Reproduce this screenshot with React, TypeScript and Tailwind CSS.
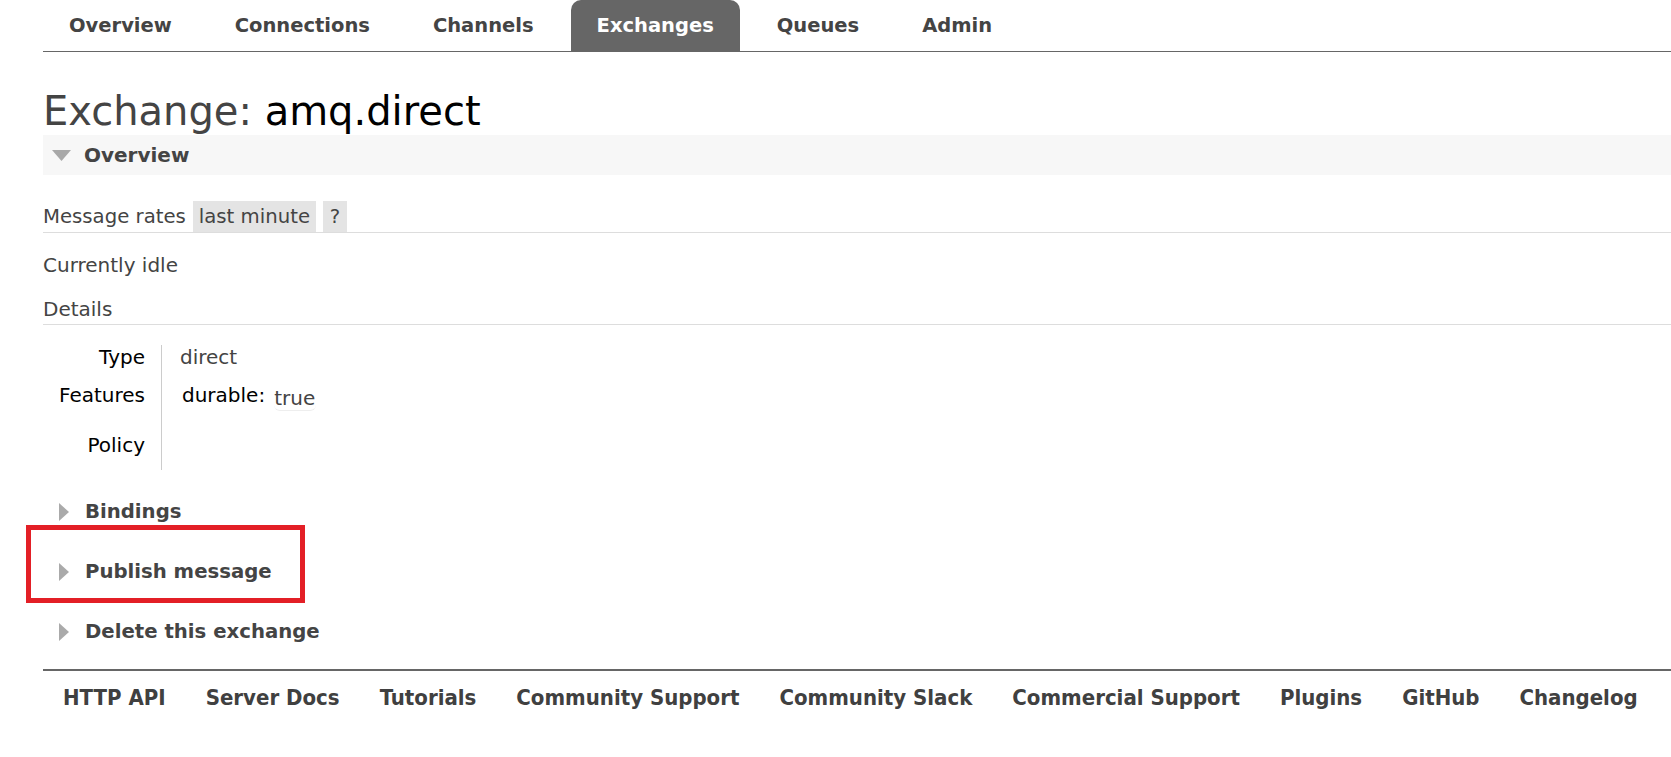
const navItems = ["Overview", "Connections", "Channels", "Exchanges", "Queues", "Admin"];

const footerLinks = [
  "HTTP API",
  "Server Docs",
  "Tutorials",
  "Community Support",
  "Community Slack",
  "Commercial Support",
  "Plugins",
  "GitHub",
  "Changelog",
];

function TriangleRight() {
  return (
    <svg width="10" height="18" viewBox="0 0 10 18" className="shrink-0">
      <polygon points="0,0 10,9 0,18" fill="#aaaaaa" />
    </svg>
  );
}

function TriangleDown() {
  return (
    <svg width="19" height="11" viewBox="0 0 19 11" className="shrink-0">
      <polygon points="0,0 19,0 9.5,11" fill="#a8a8a8" />
    </svg>
  );
}

function Section({ title, highlight }: { title: string; highlight?: boolean }) {
  return (
    <div className="relative flex h-[60px] items-center">
      <div className="flex items-center pl-[16px]">
        <TriangleRight />
        <span className="ml-[16px] text-[19.7px] font-bold leading-[24px] text-[#444]">{title}</span>
      </div>
      {highlight && (
        <div className="pointer-events-none absolute -left-[17px] -top-[17px] h-[78px] w-[279px] border-[5px] border-[#e31f26]" />
      )}
    </div>
  );
}

export default function App() {
  return (
    <div className="min-h-[757px] bg-white pl-[43px] font-['DejaVu_Sans',Verdana,sans-serif] text-[#444]">
      {/* top tabs */}
      <nav className="flex h-[52px] gap-[11px] border-b border-[#666]">
        {navItems.map((item) => (
          <div
            key={item}
            className={
              item === "Exchanges"
                ? "flex items-center rounded-t-[10px] bg-[#666] px-[26px] text-[19.5px] font-bold text-white"
                : "flex items-center px-[26px] text-[19.5px] font-bold text-[#444]"
            }
          >
            {item}
          </div>
        ))}
      </nav>

      <h1 className="mt-[35px] text-[40px] font-normal leading-[48px]">
        <span className="text-[#444]">Exchange: </span>
        <span className="text-black">amq.direct</span>
      </h1>

      <div className="flex h-[40px] items-center bg-[#f7f7f7] pl-[9px]">
        <TriangleDown />
        <span className="ml-[13px] text-[20px] font-bold text-[#444]">Overview</span>
      </div>

      <div className="mt-[26px] flex h-[32px] items-stretch border-b border-[#ddd] text-[19.7px]">
        <span className="flex items-center">Message rates</span>
        <span className="ml-[7px] flex items-center bg-[#e4e4e4] px-[6px]">last minute</span>
        <span className="ml-[7px] flex w-[24px] items-center justify-center bg-[#e4e4e4]">?</span>
      </div>

      <p className="mt-[20px] text-[20px] leading-[24px]">Currently idle</p>

      <div className="mt-[20px] border-b border-[#ddd] pb-[3px] text-[20px] leading-[24px]">Details</div>

      <div className="mt-[20px] flex text-[20px] leading-[24px]">
        <div className="flex w-[102px] flex-col items-end text-black">
          <div className="h-[38px]">Type</div>
          <div className="h-[50px]">Features</div>
          <div className="h-[37px]">Policy</div>
        </div>
        <div className="ml-[16px] flex flex-col border-l border-[#ccc] pl-[18px]">
          <div className="h-[38px] text-[#444]">direct</div>
          <div className="flex h-[50px] items-start pl-[2px]">
            <span className="text-black">durable:</span>
            <span className="ml-[9px] mt-[3px] rounded-b-[6px] border-b border-[#eee] pr-[1px] text-[#444]">true</span>
          </div>
          <div className="h-[37px]" />
        </div>
      </div>

      <div className="mt-[12px]">
        <Section title="Bindings" />
        <Section title="Publish message" highlight />
        <Section title="Delete this exchange" />
      </div>

      <footer className="mt-[7px] flex gap-[40px] border-t-2 border-[#666] pl-[20px] pt-[15px] font-['DejaVu_Sans_Condensed','DejaVu_Sans',sans-serif] text-[22px] font-bold leading-[24px] text-[#404040] [font-stretch:condensed]">
        {footerLinks.map((link) => (
          <span key={link}>{link}</span>
        ))}
      </footer>
    </div>
  );
}
